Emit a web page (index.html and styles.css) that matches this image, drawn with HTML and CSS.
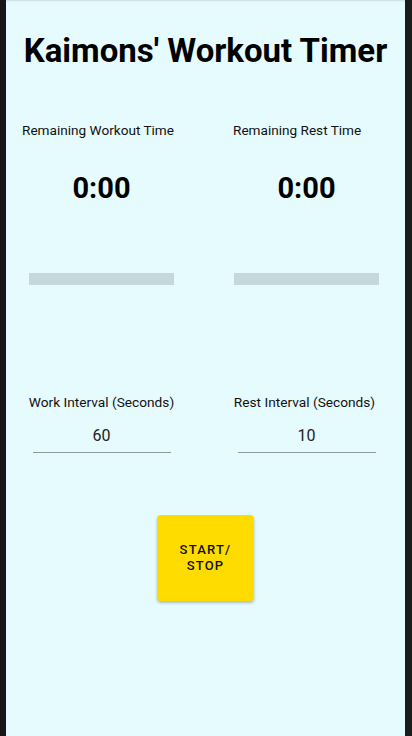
FILE: index.html
```html
<!DOCTYPE html>
<html>
<head>
<meta charset="utf-8">
<link rel="stylesheet" href="styles.css">
</head>
<body>
<div class="screen">
  <h1 class="title">Kaimons' Workout Timer</h1>
  <div class="grid">
    <div class="col col-left">
      <div class="label label-left">Remaining Workout Time</div>
      <div class="time">0:00</div>
      <div class="bar"></div>
    </div>
    <div class="col col-right">
      <div class="label label-right">Remaining Rest Time</div>
      <div class="time">0:00</div>
      <div class="bar"></div>
    </div>
  </div>
  <div class="grid inputs">
    <div class="col">
      <div class="in-label">Work Interval (Seconds)</div>
      <div class="field">60</div>
    </div>
    <div class="col">
      <div class="in-label in-label-right">Rest Interval (Seconds)</div>
      <div class="field">10</div>
    </div>
  </div>
  <div class="actions">
    <button class="btn">START/<br>STOP</button>
  </div>
</div>
</body>
</html>
```
FILE: styles.css
```css
html, body {
  margin: 0;
  padding: 0;
}
body {
  width: 412px;
  height: 736px;
  overflow: hidden;
  font-family: Roboto, "Noto Sans", sans-serif;
  color: #000;
}
.screen {
  box-sizing: border-box;
  width: 412px;
  height: 736px;
  background: #e6fbfe;
  border-left: 6px solid #171717;
  border-right: 7px solid #1b1b1b;
  box-shadow: inset 0 2px 2px -1px rgba(0,0,0,0.12);
}
.title {
  margin: 0;
  padding-top: 32px;
  font-size: 33px;
  line-height: 38px;
  font-weight: 700;
  text-align: center;
  letter-spacing: 0;
}
.grid {
  display: grid;
  grid-template-columns: 191px 191px;
  column-gap: 14px;
}
.col {
  display: flex;
  flex-direction: column;
  align-items: center;
}
.label {
  align-self: stretch;
  font-size: 13.6px;
  line-height: 16px;
  margin-top: 52px;
  color: #111;
}
.label-left { padding-left: 16px; }
.label-right { padding-left: 22px; }
.time {
  margin-top: 33px;
  font-size: 29px;
  line-height: 34px;
  font-weight: 700;
}
.bar {
  margin-top: 68px;
  width: 145px;
  height: 12px;
  background: #c5d9dc;
}
.inputs {
  margin-top: 109px;
}
.in-label {
  font-size: 13.7px;
  line-height: 16px;
  color: #111;
}
.in-label-right {
  margin-right: 4px;
}
.field {
  margin-top: 16px;
  width: 138px;
  font-size: 16px;
  line-height: 20px;
  text-align: center;
  color: #222;
  padding-bottom: 6px;
  border-bottom: 1.5px solid #8c9b9d;
}
.actions {
  display: flex;
  justify-content: center;
  margin-top: 62px;
}
.btn {
  width: 97px;
  height: 86px;
  background: #ffdc00;
  border: none;
  border-radius: 4px;
  box-shadow: 0 2px 3px rgba(0,0,0,0.25);
  font-family: Roboto, "Noto Sans", sans-serif;
  font-size: 13px;
  font-weight: 500;
  letter-spacing: 1.2px;
  line-height: 16px;
  color: #111;
}
```
